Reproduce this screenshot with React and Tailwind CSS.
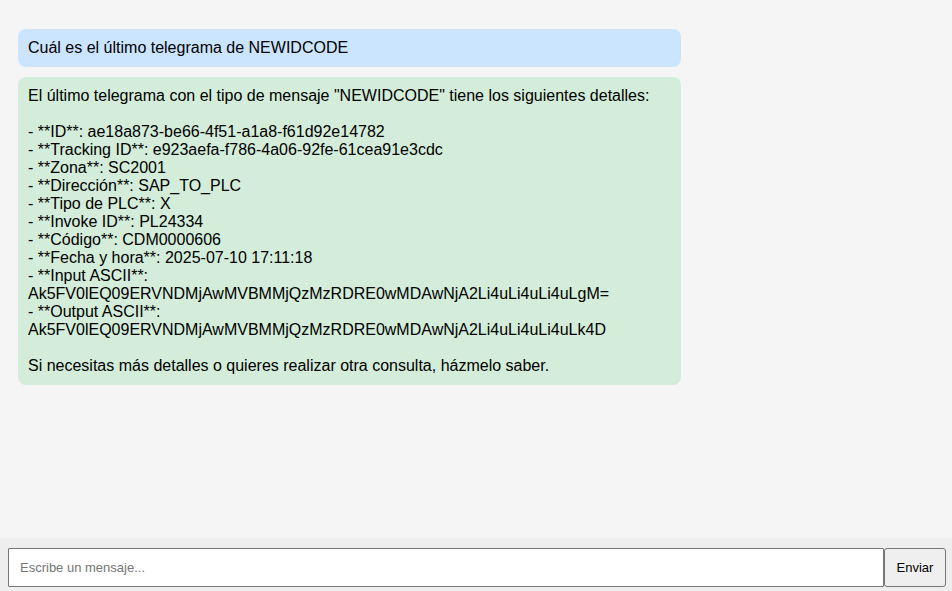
const details = `El último telegrama con el tipo de mensaje "NEWIDCODE" tiene los siguientes detalles:

- **ID**: ae18a873-be66-4f51-a1a8-f61d92e14782
- **Tracking ID**: e923aefa-f786-4a06-92fe-61cea91e3cdc
- **Zona**: SC2001
- **Dirección**: SAP_TO_PLC
- **Tipo de PLC**: X
- **Invoke ID**: PL24334
- **Código**: CDM0000606
- **Fecha y hora**: 2025-07-10 17:11:18
- **Input ASCII**: Ak5FV0lEQ09ERVNDMjAwMVBMMjQzMzRDRE0wMDAwNjA2Li4uLi4uLi4uLgM=
- **Output ASCII**: Ak5FV0lEQ09ERVNDMjAwMVBMMjQzMzRDRE0wMDAwNjA2Li4uLi4uLi4uLk4D

Si necesitas más detalles o quieres realizar otra consulta, házmelo saber.`;

const messages = [
  { role: "user", text: "Cuál es el último telegrama de NEWIDCODE" },
  { role: "bot", text: details },
];

function Message({ role, text }) {
  return (
    <div
      className={
        "box-content w-[70%] whitespace-pre-wrap rounded-lg p-2.5 " +
        (role === "user" ? "bg-[#cce5ff]" : "bg-[#d4edda]")
      }
    >
      {text}
    </div>
  );
}

export default function App() {
  return (
    <div className="flex h-screen flex-col bg-[#f5f5f5] font-['Liberation_Sans',Arial,sans-serif] text-base leading-[18px] text-black">
      <main className="flex min-h-0 flex-1 flex-col gap-2.5 overflow-y-auto pt-[29px] pr-4 pl-[18px]">
        {messages.map((message) => (
          <Message key={message.role} {...message} />
        ))}
      </main>
      <form
        className="flex bg-[#eeeeee] pt-2.5 pr-1.5 pb-1 pl-2 text-[13px]"
        onSubmit={(event) => event.preventDefault()}
      >
        <input
          type="text"
          aria-label="Mensaje"
          placeholder="Escribe un mensaje..."
          className="h-[39px] min-w-0 flex-1 rounded-[1px] border border-[#767676] bg-white px-[11px] placeholder:text-[#757575]"
        />
        <button
          type="submit"
          className="min-w-[62px] rounded-[3px] border border-[#767676] bg-[#efefef] px-2.5"
        >
          Enviar
        </button>
      </form>
    </div>
  );
}
